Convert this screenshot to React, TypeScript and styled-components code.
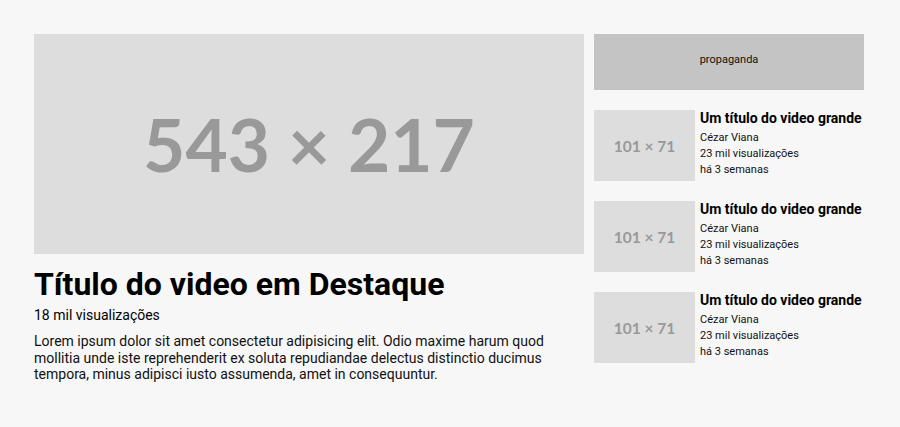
import React from "react";
import styled, { createGlobalStyle } from "styled-components";

const Global = createGlobalStyle`
  html, body { margin: 0; padding: 0; background: #f7f7f7; }
  body { font-family: Roboto, "Liberation Sans", sans-serif; color: #000; }
  * { box-sizing: border-box; }
`;

const Page = styled.div`
  display: flex;
  gap: 10px;
  padding: 34px 36px 0 34px;
  align-items: flex-start;
`;

const Main = styled.main`
  width: 550px;
  display: flex;
  flex-direction: column;
`;

const Placeholder = styled.div<{ $w: number; $h: number; $fs: number }>`
  width: ${(p) => p.$w}px;
  height: ${(p) => p.$h}px;
  flex: none;
  background: #dddddd;
  color: #999999;
  font-family: Lato, "Open Sans", sans-serif;
  font-weight: 700;
  font-size: ${(p) => p.$fs}px;
  display: flex;
  align-items: center;
  justify-content: center;
  white-space: nowrap;
`;

const Title = styled.h1`
  margin: 12px 0 0;
  font-size: 32px;
  font-weight: 700;
  line-height: 37px;
`;

const Views = styled.div`
  margin-top: 4px;
  font-size: 14px;
`;

const Description = styled.p`
  margin: 10px 0 0;
  font-size: 14px;
  line-height: 16.5px;
  color: #111;
`;

const Aside = styled.aside`
  width: 270px;
  display: flex;
  flex-direction: column;
  gap: 20px;
`;

const Ad = styled.div`
  height: 56px;
  background: #c4c4c4;
  font-size: 11px;
  text-align: center;
  padding-top: 19px;
  color: #111;
`;

const Card = styled.div`
  display: flex;
  gap: 5px;
`;

const CardInfo = styled.div`
  display: flex;
  flex-direction: column;
`;

const CardTitle = styled.div`
  font-size: 14px;
  font-weight: 700;
  line-height: 16px;
  white-space: nowrap;
`;

const Meta = styled.div`
  margin-top: 4px;
  font-size: 11px;
  line-height: 16px;
  color: #111;
`;

const cards = [1, 2, 3];

export default function App() {
  return (
    <>
      <Global />
      <Page>
        <Main>
          <Placeholder $w={550} $h={220} $fs={73}>543 × 217</Placeholder>
          <Title>Título do video em Destaque</Title>
          <Views>18 mil visualizações</Views>
          <Description>
            Lorem ipsum dolor sit amet consectetur adipisicing elit. Odio maxime harum quod
            mollitia unde iste reprehenderit ex soluta repudiandae delectus distinctio ducimus
            tempora, minus adipisci iusto assumenda, amet in consequuntur.
          </Description>
        </Main>
        <Aside>
          <Ad>propaganda</Ad>
          {cards.map((i) => (
            <Card key={i}>
              <Placeholder $w={101} $h={71} $fs={15.5}>101 × 71</Placeholder>
              <CardInfo>
                <CardTitle>Um título do video grande</CardTitle>
                <Meta>
                  Cézar Viana
                  <br />
                  23 mil visualizações
                  <br />
                  há 3 semanas
                </Meta>
              </CardInfo>
            </Card>
          ))}
        </Aside>
      </Page>
    </>
  );
}
